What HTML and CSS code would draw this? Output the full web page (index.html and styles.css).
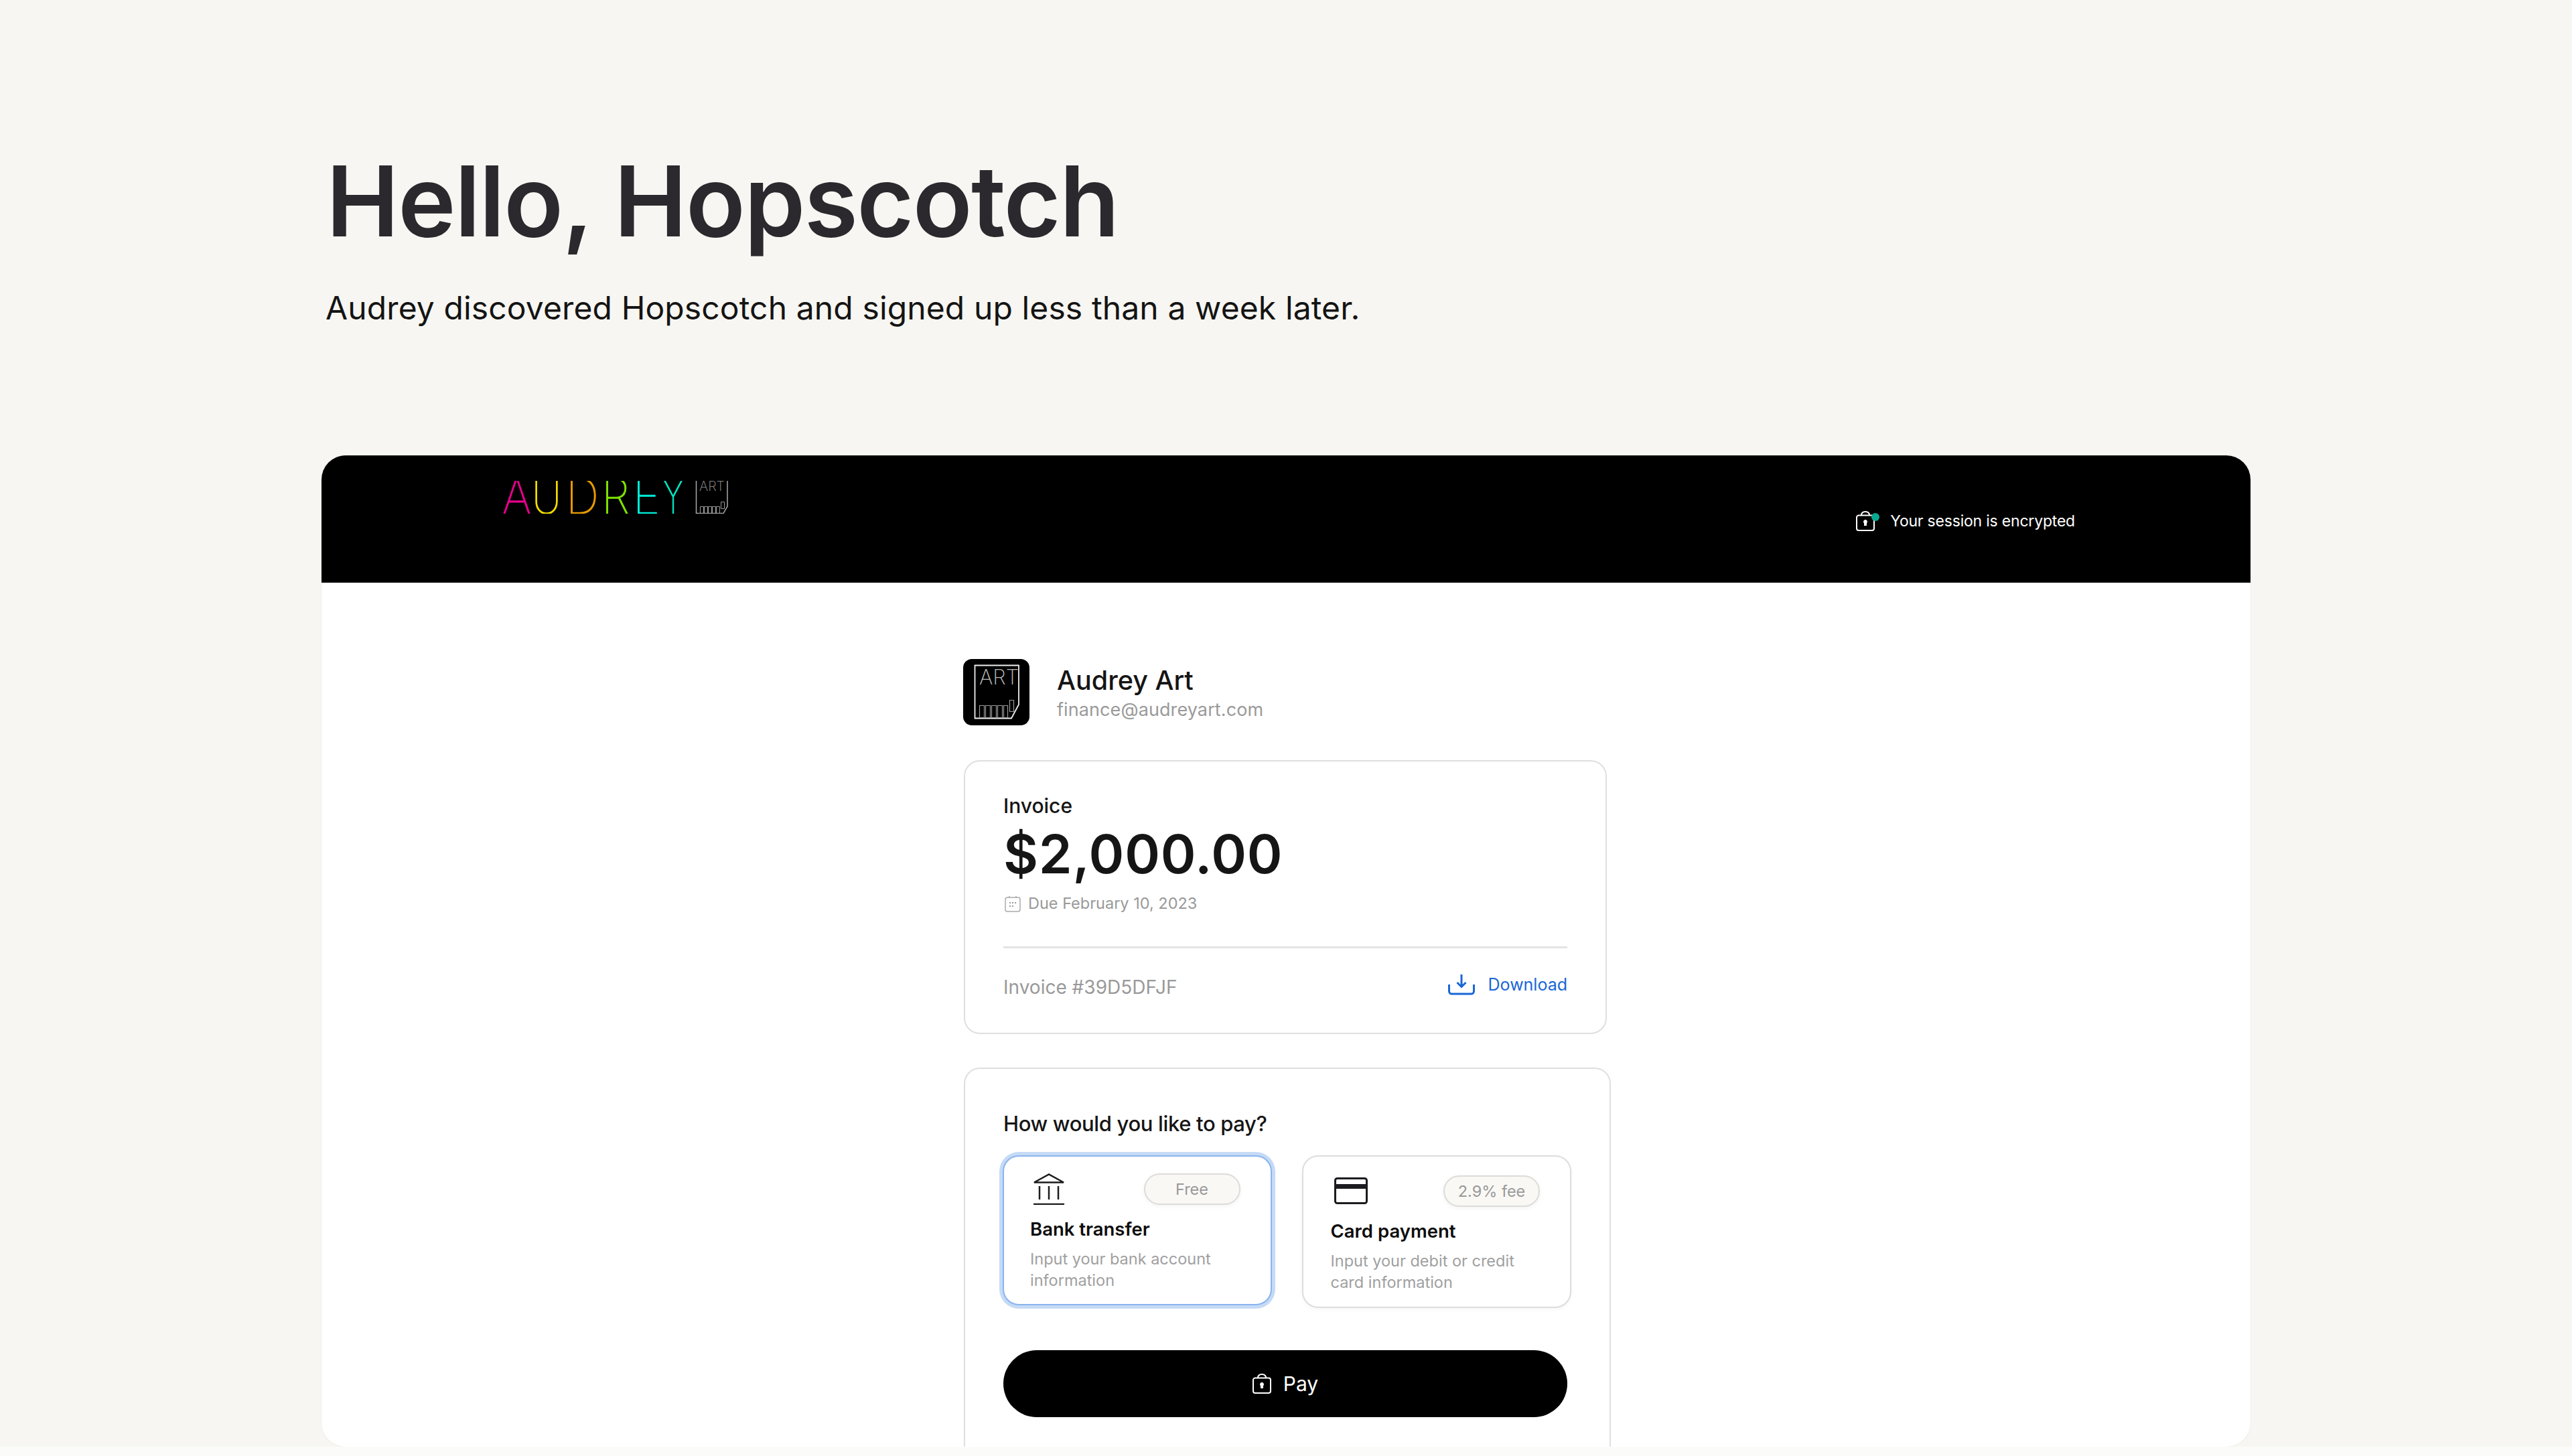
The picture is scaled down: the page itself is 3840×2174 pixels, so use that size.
FILE: index.html
```html
<!DOCTYPE html>
<html lang="en">
<head>
<meta charset="utf-8">
<title>Hello, Hopscotch</title>
<link rel="stylesheet" href="styles.css">
</head>
<body>
<div class="page">
  <header class="hero">
    <h1 class="hero-title">Hello, Hopscotch</h1>
    <p class="hero-sub">Audrey discovered Hopscotch and signed up less than a week later.</p>
  </header>
  <main class="sheet">
    <div class="topbar">
      <svg class="logo" width="340" height="49" viewBox="0 0 340 49">
        <text class="lt lt-a" x="0" y="49" textLength="43" lengthAdjust="spacingAndGlyphs">A</text>
        <text class="lt lt-u" x="44" y="49" textLength="44" lengthAdjust="spacingAndGlyphs">U</text>
        <text class="lt lt-d" x="95" y="49" textLength="49" lengthAdjust="spacingAndGlyphs">D</text>
        <text class="lt lt-r" x="148" y="49" textLength="42" lengthAdjust="spacingAndGlyphs">R</text>
        <text class="lt lt-e" x="195" y="49" textLength="40" lengthAdjust="spacingAndGlyphs">E</text>
        <text class="lt lt-y" x="238" y="49" textLength="34" lengthAdjust="spacingAndGlyphs">Y</text>
        <path class="art-line" d="M289.500 0V48.500H330L336 38V0"/>
        <text class="art-small" x="294" y="15">ART</text>
        <path class="art-bars" d="M295.500 38.500h5v10h-5zM301.500 38.500h5v10h-5zM307.500 38.500h5v10h-5zM313.500 38.500h5v10h-5zM319.500 38.500h5v10h-5zM326.500 31.500h5v10h-5z"/>
      </svg>
      <div class="session">
        <svg class="lock" width="36" height="30" viewBox="0 0 36 30">
          <path class="lock-stroke" d="M8 6.500C8 3 10.500 1 14 1s6 2 6 5.500M4 6.500h20a3 3 0 0 1 3 3V26a3 3 0 0 1-3 3H4a3 3 0 0 1-3-3V9.500a3 3 0 0 1 3-3z"/>
          <path class="lock-key" d="M14 13a3 3 0 0 1 2 5.200V22h-4v-3.800A3 3 0 0 1 14 13z"/>
          <circle class="lock-dot" cx="29" cy="9" r="6"/>
        </svg>
        <span class="session-text">Your session is encrypted</span>
      </div>
    </div>
    <div class="content">
      <div class="merchant">
        <svg class="avatar" width="99" height="99" viewBox="0 0 99 99">
          <rect class="av-bg" width="99" height="99" rx="13"/>
          <path class="av-doc" d="M17.500 9.500H83V68L72 88.500H17.500z"/>
          <text class="av-art" x="24" y="38">ART</text>
          <path class="av-bars" d="M24.500 69.500h7v18h-7zM33.500 69.500h7v18h-7zM42.500 69.500h7v18h-7zM51.500 69.500h7v18h-7zM60.500 69.500h6v18h-6zM69.500 61.500h6v17h-6z"/>
        </svg>
        <div class="merchant-info">
          <div class="merchant-name">Audrey Art</div>
          <div class="merchant-mail">finance@audreyart.com</div>
        </div>
      </div>
      <section class="card invoice">
        <div class="inv-label">Invoice</div>
        <div class="inv-amount">$2,000.00</div>
        <div class="inv-due">
          <svg width="24" height="25" viewBox="0 0 24 25">
            <path class="cal" d="M4 3h16a3 3 0 0 1 3 3v15a3 3 0 0 1-3 3H4a3 3 0 0 1-3-3V6a3 3 0 0 1 3-3zM7 1v3M17 1v3"/>
            <path class="cal-dots" d="M7 10h2v2H7zM11 10h2v2h-2zM15 10h2v2h-2zM7 15h2v2H7zM11 15h2v2h-2z"/>
          </svg>
          <span>Due February 10, 2023</span>
        </div>
        <div class="inv-foot">
          <span class="inv-num">Invoice #39D5DFJF</span>
          <a class="download">
            <svg width="40" height="32" viewBox="0 0 40 32">
              <path class="dl" d="M1.500 16v10a4 4 0 0 0 4 4h29a4 4 0 0 0 4-4V16M20 1v18M13.500 13l6.500 6.500 6.500-6.500"/>
            </svg>
            <span>Download</span>
          </a>
        </div>
      </section>
      <section class="card pay">
        <h2 class="pay-title">How would you like to pay?</h2>
        <div class="options">
          <div class="option option-active">
            <div class="option-head">
              <svg width="46" height="47" viewBox="0 0 46 47">
                <path class="bank" d="M1 13.500L23 1.500l22 12zM9 19v20M23 19v20M37 19v20M0 46h46"/>
              </svg>
              <span class="pill">Free</span>
            </div>
            <div class="option-title">Bank transfer</div>
            <div class="option-desc">Input your bank account<br>information</div>
          </div>
          <div class="option option-card">
            <div class="option-head">
              <svg class="credit-icon" width="50" height="40" viewBox="0 0 50 40">
                <rect class="credit" x="1.500" y="1.500" width="47" height="37" rx="3"/>
                <rect class="credit-band" x="2" y="10" width="46" height="7"/>
              </svg>
              <span class="pill">2.9% fee</span>
            </div>
            <div class="option-title">Card payment</div>
            <div class="option-desc">Input your debit or credit<br>card information</div>
          </div>
        </div>
        <button class="pay-btn">
          <svg width="28" height="30" viewBox="0 0 28 30">
            <path class="lock-stroke" d="M8 6.500C8 3 10.500 1 14 1s6 2 6 5.500M4 6.500h20a3 3 0 0 1 3 3V26a3 3 0 0 1-3 3H4a3 3 0 0 1-3-3V9.500a3 3 0 0 1 3-3z"/>
            <path class="lock-key" d="M14 13a3 3 0 0 1 2 5.200V22h-4v-3.800A3 3 0 0 1 14 13z"/>
          </svg>
          <span>Pay</span>
        </button>
      </section>
    </div>
  </main>
</div>
</body>
</html>
```

FILE: styles.css
```css
* { box-sizing: border-box; }
html, body { margin: 0; padding: 0; }
body {
  background: #fbfbfa;
  font-family: Inter, "Liberation Sans", sans-serif;
  color: #111;
  height: 2174px;
  overflow: hidden;
}
.page {
  height: 2160px;
  background: #f7f6f2;
  padding: 0 480px;
  overflow: hidden;
}
.hero { height: 680px; padding-top: 210px; }
.hero-title {
  margin: 0 0 0 7px;
  font-size: 146px;
  line-height: 180px;
  font-weight: 600;
  color: #2b292d;
  letter-spacing: -1.600px;
}
.hero-sub {
  margin: 40px 0 0 6px;
  font-size: 48px;
  line-height: 60px;
  letter-spacing: .12px;
  color: #141414;
}
.sheet {
  height: 1480px;
  background: #fff;
  border-radius: 36px;
  overflow: hidden;
  box-shadow: 0 0 0 1px #efeee9;
}
.topbar {
  height: 190px;
  background: #000;
  display: flex;
  justify-content: space-between;
  align-items: flex-start;
  padding: 38px 262px 0 270px;
}
.logo { display: block; }
.lt { font-family: Inter, sans-serif; font-weight: 100; font-size: 72px; stroke-width: 1.500px; }
.lt-a { fill: #e6008c; stroke: #e6008c; }
.lt-u { fill: #f2dc00; stroke: #f2dc00; }
.lt-d { fill: #e89a00; stroke: #e89a00; }
.lt-r { fill: #7fe000; stroke: #7fe000; }
.lt-e { fill: #00eed8; stroke: #00eed8; }
.lt-y { fill: #00e6c4; stroke: #00e6c4; }
.art-line { fill: none; stroke: #aaa; stroke-width: 1.500px; }
.art-small { font-family: Inter, sans-serif; font-weight: 200; font-size: 20px; fill: #999; }
.art-bars { fill: none; stroke: #999; stroke-width: 1px; }
.session {
  display: flex;
  align-items: center;
  gap: 15px;
  margin-top: 45px;
}
.lock, .pay-btn svg { display: block; }
.lock-stroke { fill: none; stroke: #fff; stroke-width: 2px; }
.lock-key { fill: #fff; }
.lock-dot { fill: #0aa88f; }
.session-text {
  color: #fff;
  font-size: 23px;
  line-height: 30px;
  letter-spacing: -.2px;
}
.content {
  padding: 114px 0 0 959px;
  width: 1930px;
}
.merchant {
  display: flex;
  align-items: flex-start;
  gap: 41px;
  margin-bottom: 52px;
  margin-left: -1px;
}
.avatar { display: block; flex: none; }
.av-bg { fill: #000; }
.av-doc { fill: none; stroke: #eee; stroke-width: 1.800px; }
.av-art { font-family: Inter, sans-serif; font-weight: 200; font-size: 31px; fill: #bbb; }
.av-bars { fill: none; stroke: #999; stroke-width: 1.200px; }
.merchant-name {
  margin-top: 8px;
  font-size: 39.500px;
  line-height: 48px;
  font-weight: 500;
  color: #151515;
}
.merchant-mail {
  font-size: 27px;
  line-height: 36px;
  margin-top: 2px;
  letter-spacing: .1px;
  color: #9a9a9a;
}
.card {
  background: #fff;
  border: 2px solid #dfdfdf;
  border-radius: 24px;
}
.invoice {
  width: 960px;
  height: 409px;
  padding: 48px 57px 0;
  margin-bottom: 50px;
}
.inv-label {
  font-size: 30px;
  line-height: 36px;
  font-weight: 500;
  color: #151515;
}
.inv-amount {
  margin-top: 6px;
  font-size: 80px;
  line-height: 96px;
  font-weight: 600;
  letter-spacing: .8px;
  color: #151515;
}
.inv-due {
  display: flex;
  align-items: center;
  gap: 11px;
  margin-top: 11px;
  padding-left: 2px;
  font-size: 23.500px;
  line-height: 30px;
  color: #999;
}
.inv-due svg { display: block; flex: none; }
.cal { fill: none; stroke: #aaa; stroke-width: 1.500px; }
.cal-dots { fill: #999; }
.inv-foot {
  display: flex;
  justify-content: space-between;
  align-items: center;
  margin-top: 49px;
  border-top: 3px solid #e3e3e3;
  padding-top: 41px;
}
.inv-num { font-size: 28px; line-height: 34px; color: #999; }
.download {
  display: flex;
  align-items: center;
  gap: 20px;
  margin-top: -8px;
  font-size: 25px;
  line-height: 32px;
  color: #1a66d6;
}
.download svg { display: block; }
.dl { fill: none; stroke: #1a66d6; stroke-width: 3px; }
.pay {
  width: 966px;
  height: 640px;
  padding: 62px 57px 0;
}
.pay-title {
  margin: 0;
  font-size: 31px;
  line-height: 40px;
  font-weight: 500;
  letter-spacing: -.35px;
  color: #151515;
}
.options {
  display: flex;
  align-items: flex-start;
  gap: 45px;
  margin-top: 27px;
}
.option {
  border-radius: 24px;
  background: #fff;
}
.option-active {
  width: 402px;
  height: 224px;
  margin-left: -1px;
  padding: 25px 45px 0 39px;
  border: 2px solid #8ab4ef;
  box-shadow: 0 0 0 5px #c5daf5;
}
.option-card {
  width: 403px;
  height: 228px;
  padding: 28px 45px 0 41px;
  border: 2px solid #dddddb;
  box-shadow: 0 2px 6px rgba(0, 0, 0, .04);
}
.option-head {
  display: flex;
  justify-content: space-between;
  align-items: flex-start;
  height: 60px;
  padding-left: 5px;
}
.option-head svg { display: block; }
.credit-icon { margin-top: 3px; }
.pill {
  width: 144px;
  height: 47px;
  display: flex;
  align-items: center;
  justify-content: center;
  background: #f9f8f5;
  border: 2px solid #dddcd8;
  border-radius: 24px;
  font-size: 23.500px;
  color: #999;
  box-shadow: 0 2px 6px rgba(0, 0, 0, .05);
}
.option-title {
  margin-top: 5px;
  font-size: 27.500px;
  line-height: 36px;
  font-weight: 600;
  color: #0d0d0d;
}
.option-desc {
  margin-top: 11px;
  font-size: 23.500px;
  line-height: 32px;
  color: #a0a0a0;
}
.bank { fill: none; stroke: #1c1c1c; stroke-width: 2.500px; }
.credit { fill: none; stroke: #1c1c20; stroke-width: 3px; }
.credit-band { fill: #1c1c20; }
.pay-btn {
  display: flex;
  align-items: center;
  justify-content: center;
  gap: 18px;
  width: 842px;
  height: 100px;
  margin-top: 63px;
  border: 0;
  border-radius: 50px;
  background: #000;
  color: #fff;
  font-family: inherit;
  font-size: 30px;
  padding: 0;
}
```
